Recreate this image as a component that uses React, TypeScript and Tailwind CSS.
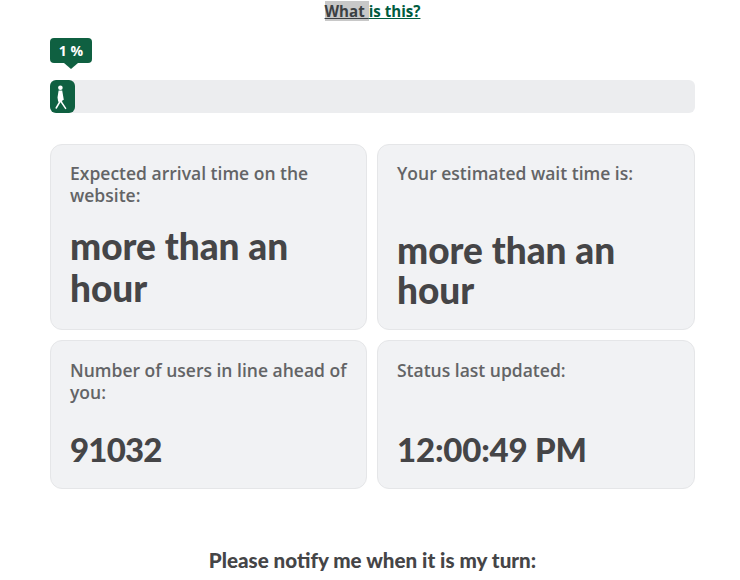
const labelFont = "font-['Open_Sans',sans-serif]";

function Card({ label, value, labelClass, valueClass }: { label: string; value: string; labelClass: string; valueClass: string }) {
  return (
    <div className="rounded-[12px] border border-[#e5e6e8] bg-[#f1f2f4] px-[19px]">
      <div className={`${labelFont} text-[17.5px] font-semibold leading-[22px] text-[#636466] ${labelClass}`}>{label}</div>
      <div className={`font-['Lato',sans-serif] font-black text-[#454547] ${valueClass}`}>{value}</div>
    </div>
  );
}

function Walker() {
  return (
    <svg width="25" height="33" viewBox="0 0 25 33" fill="none">
      <circle cx="10.4" cy="7.7" r="2.3" fill="#fff" />
      <path d="M8.6 10.4h3.6l1.6 9.4-1.5.8-.2 1.2H8.2l-.7-4.2z" fill="#fff" />
      <path d="M10 21.5L6.2 28M11 21.5L15.6 28.4" stroke="#fff" strokeWidth="1.5" strokeLinecap="round" />
    </svg>
  );
}

export default function App() {
  return (
    <div className="h-[580px] w-[740px] overflow-hidden bg-white pl-[50px] pr-[45px]">
      <div className={`${labelFont} pt-[1px] text-center text-[15.1px] font-bold leading-[21px]`}>
        <a href="#">
          <span className="bg-[#c8c8c8] text-[#3c4043] underline">What </span>
          <span className="text-[#005c3f] underline">is this?</span>
        </a>
      </div>

      <div className="relative mt-[16px] h-[25px] w-[42px] rounded-[4px] bg-[#0f6041] text-center">
        <span className={`${labelFont} text-[14px] font-bold leading-[25px] text-white`}>1 %</span>
        <div className="absolute left-[14px] top-[25px] h-0 w-0 border-x-[7px] border-t-[6px] border-x-transparent border-t-[#0f6041]" />
      </div>

      <div className="mt-[17px] h-[33px] rounded-[6px] bg-[#ecedef]">
        <div className="h-[33px] w-[25px] rounded-[6px] bg-[#0f6041]">
          <Walker />
        </div>
      </div>

      <div className="mt-[31px] grid grid-cols-[317px_318px] gap-[10px]">
        <Card label="Expected arrival time on the website:" value="more than an hour" labelClass="min-h-[61px] pt-[17px]" valueClass="mt-[19px] pb-[20px] text-[37px] leading-[42px]" />
        <Card label="Your estimated wait time is:" value="more than an hour" labelClass="min-h-[61px] pt-[17px]" valueClass="mt-[24px] text-[37px] leading-[40px]" />
        <Card label="Number of users in line ahead of you:" value="91032" labelClass="min-h-[62px] pt-[18px]" valueClass="mt-[26px] pb-[19px] text-[33px] leading-[40px] tracking-[-0.8px]" />
        <Card label="Status last updated:" value="12:00:49 PM" labelClass="min-h-[62px] pt-[18px]" valueClass="mt-[26px] text-[33px] leading-[40px] tracking-[-0.2px]" />
      </div>

      <div className="mt-[59px] text-center font-['Lato',sans-serif] text-[20.6px] font-black leading-[24px] text-[#454547]">
        Please notify me when it is my turn:
      </div>
    </div>
  );
}
